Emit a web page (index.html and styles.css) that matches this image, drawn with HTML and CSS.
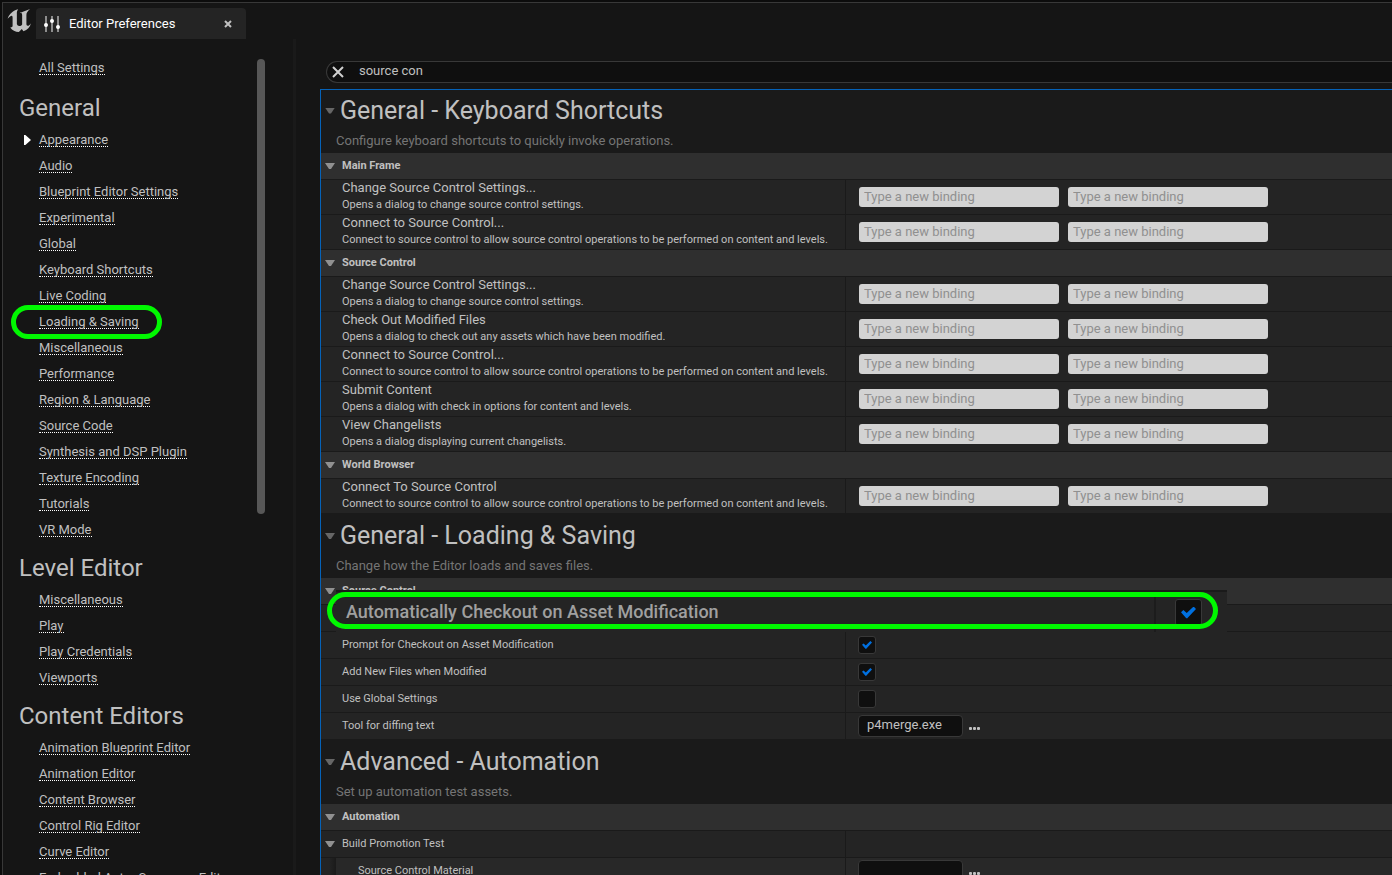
FILE: index.html
```html
<!DOCTYPE html>
<html lang="en">
<head>
<meta charset="utf-8">
<title>Editor Preferences</title>
<link rel="stylesheet" href="styles.css">
</head>
<body>
<div class="window">
  <header class="titlebar">
    <svg class="logo" viewBox="20 22 76 74" aria-hidden="true"><path d="M22 54C26 39 39 29 54 25C50 30 50 33 50 39V70C51 74 54 76 57 76C61 76 64 74 66 71V42C66 37 63 35 59 36C66 33 77 29 90 24C83 31 79 35 79 42V69C79 73 80 75 83 75C87 75 90 71 93 67C90 80 82 87 70 92L65 85L56 94C45 93 36 89 30 80C35 80 37 78 37 75V50C37 46 35 44 33 45C29 46 26 49 22 54Z"/></svg>
    <div class="tab">
      <svg class="sliders" viewBox="0 0 16 16" aria-hidden="true"><path d="M2 0V16M8 0V16M14 0V16"/><circle cx="2" cy="9" r="2"/><circle cx="8" cy="5" r="2"/><circle cx="14" cy="11" r="2"/></svg>
      <span class="tab-title">Editor Preferences</span>
      <button class="tab-close" aria-label="Close tab"><svg viewBox="0 0 8 8"><path d="M1 1L7 7M7 1L1 7"/></svg></button>
    </div>
  </header>
  <div class="body">
    <nav class="sidebar">
      <div class="nav-list">
        <div class="nav-item all"><a href="#">All Settings</a></div>
        <h2>General</h2>
        <div class="nav-item current"><a href="#">Appearance</a></div>
        <div class="nav-item"><a href="#">Audio</a></div>
        <div class="nav-item"><a href="#">Blueprint Editor Settings</a></div>
        <div class="nav-item"><a href="#">Experimental</a></div>
        <div class="nav-item"><a href="#">Global</a></div>
        <div class="nav-item"><a href="#">Keyboard Shortcuts</a></div>
        <div class="nav-item"><a href="#">Live Coding</a></div>
        <div class="nav-item marked"><a href="#">Loading &amp; Saving</a></div>
        <div class="nav-item"><a href="#">Miscellaneous</a></div>
        <div class="nav-item"><a href="#">Performance</a></div>
        <div class="nav-item"><a href="#">Region &amp; Language</a></div>
        <div class="nav-item"><a href="#">Source Code</a></div>
        <div class="nav-item"><a href="#">Synthesis and DSP Plugin</a></div>
        <div class="nav-item"><a href="#">Texture Encoding</a></div>
        <div class="nav-item"><a href="#">Tutorials</a></div>
        <div class="nav-item"><a href="#">VR Mode</a></div>
        <h2>Level Editor</h2>
        <div class="nav-item"><a href="#">Miscellaneous</a></div>
        <div class="nav-item"><a href="#">Play</a></div>
        <div class="nav-item"><a href="#">Play Credentials</a></div>
        <div class="nav-item"><a href="#">Viewports</a></div>
        <h2>Content Editors</h2>
        <div class="nav-item"><a href="#">Animation Blueprint Editor</a></div>
        <div class="nav-item"><a href="#">Animation Editor</a></div>
        <div class="nav-item"><a href="#">Content Browser</a></div>
        <div class="nav-item"><a href="#">Control Rig Editor</a></div>
        <div class="nav-item"><a href="#">Curve Editor</a></div>
        <div class="nav-item"><a href="#">Embedded Actor Sequence Editor</a></div>
      </div>
      <div class="scrollbar"></div>
    </nav>
    <div class="splitter"></div>
    <main class="content">
      <div class="search">
        <button class="clear" aria-label="Clear search"><svg viewBox="0 0 12 12"><path d="M1 1L11 11M11 1L1 11"/></svg></button>
        <input type="text" value="source con" aria-label="Search settings">
      </div>
      <div class="details">
        <section>
          <div class="section-title"><span class="caret dim"></span><h1>General - Keyboard Shortcuts</h1></div>
          <p class="section-desc">Configure keyboard shortcuts to quickly invoke operations.</p>
          <h3 class="category"><span class="caret"></span>Main Frame</h3>
          <div class="row tall"><div class="name"><b>Change Source Control Settings...</b><small>Opens a dialog to change source control settings.</small></div><div class="value"><input class="binding" placeholder="Type a new binding" aria-label="Change Source Control Settings, binding 1"><input class="binding" placeholder="Type a new binding" aria-label="Change Source Control Settings, binding 2"></div></div>
          <div class="row tall"><div class="name"><b>Connect to Source Control...</b><small>Connect to source control to allow source control operations to be performed on content and levels.</small></div><div class="value"><input class="binding" placeholder="Type a new binding" aria-label="Connect to Source Control, binding 1"><input class="binding" placeholder="Type a new binding" aria-label="Connect to Source Control, binding 2"></div></div>
          <h3 class="category"><span class="caret"></span>Source Control</h3>
          <div class="row tall"><div class="name"><b>Change Source Control Settings...</b><small>Opens a dialog to change source control settings.</small></div><div class="value"><input class="binding" placeholder="Type a new binding" aria-label="Change Source Control Settings, binding 1"><input class="binding" placeholder="Type a new binding" aria-label="Change Source Control Settings, binding 2"></div></div>
          <div class="row tall"><div class="name"><b>Check Out Modified Files</b><small>Opens a dialog to check out any assets which have been modified.</small></div><div class="value"><input class="binding" placeholder="Type a new binding" aria-label="Check Out Modified Files, binding 1"><input class="binding" placeholder="Type a new binding" aria-label="Check Out Modified Files, binding 2"></div></div>
          <div class="row tall"><div class="name"><b>Connect to Source Control...</b><small>Connect to source control to allow source control operations to be performed on content and levels.</small></div><div class="value"><input class="binding" placeholder="Type a new binding" aria-label="Connect to Source Control, binding 1"><input class="binding" placeholder="Type a new binding" aria-label="Connect to Source Control, binding 2"></div></div>
          <div class="row tall"><div class="name"><b>Submit Content</b><small>Opens a dialog with check in options for content and levels.</small></div><div class="value"><input class="binding" placeholder="Type a new binding" aria-label="Submit Content, binding 1"><input class="binding" placeholder="Type a new binding" aria-label="Submit Content, binding 2"></div></div>
          <div class="row tall"><div class="name"><b>View Changelists</b><small>Opens a dialog displaying current changelists.</small></div><div class="value"><input class="binding" placeholder="Type a new binding" aria-label="View Changelists, binding 1"><input class="binding" placeholder="Type a new binding" aria-label="View Changelists, binding 2"></div></div>
          <h3 class="category"><span class="caret"></span>World Browser</h3>
          <div class="row tall"><div class="name"><b>Connect To Source Control</b><small>Connect to source control to allow source control operations to be performed on content and levels.</small></div><div class="value"><input class="binding" placeholder="Type a new binding" aria-label="Connect To Source Control, binding 1"><input class="binding" placeholder="Type a new binding" aria-label="Connect To Source Control, binding 2"></div></div>
        </section>
        <section>
          <div class="section-title"><span class="caret dim"></span><h1>General - Loading &amp; Saving</h1></div>
          <p class="section-desc">Change how the Editor loads and saves files.</p>
          <h3 class="category"><span class="caret"></span>Source Control</h3>
          <div class="row zoomed">
            <div class="name"></div><div class="value"></div>
            <div class="callout">
              <label class="callout-name" for="auto">Automatically Checkout on Asset Modification</label>
              <div class="callout-value"><input type="checkbox" class="check large" id="auto" checked></div>
            </div>
          </div>
          <div class="row"><label class="name" for="prompt">Prompt for Checkout on Asset Modification</label><div class="value prop"><input type="checkbox" class="check" id="prompt" checked></div></div>
          <div class="row"><label class="name" for="addnew">Add New Files when Modified</label><div class="value prop"><input type="checkbox" class="check" id="addnew" checked></div></div>
          <div class="row"><label class="name" for="useglobal">Use Global Settings</label><div class="value prop"><input type="checkbox" class="check" id="useglobal"></div></div>
          <div class="row"><label class="name" for="difftool">Tool for diffing text</label><div class="value prop"><input type="text" class="path" id="difftool" value="p4merge.exe"><button class="more" aria-label="Browse"><i></i><i></i><i></i></button></div></div>
        </section>
        <section>
          <div class="section-title"><span class="caret dim"></span><h1>Advanced - Automation</h1></div>
          <p class="section-desc">Set up automation test assets.</p>
          <h3 class="category"><span class="caret"></span>Automation</h3>
          <div class="row"><div class="name group"><span class="caret"></span>Build Promotion Test</div><div class="value prop"></div></div>
          <div class="row nested"><label class="name" for="material">Source Control Material</label><div class="value prop"><input type="text" class="path" id="material"><button class="more" aria-label="Browse"><i></i><i></i><i></i></button></div></div>
        </section>
      </div>
    </main>
  </div>
</div>
</body>
</html>
```

FILE: styles.css
```css
*, *::before, *::after { box-sizing: border-box; }

body {
  margin: 0;
  height: 100vh;
  overflow: hidden;
  padding: 2px 0 0 2px;
  background: #0c0c0c;
  color: #c0c0c0;
  font: 13px/16px Roboto, "Liberation Sans", sans-serif;
}

h1, h2, h3, p { margin: 0; font-weight: 400; }
button { padding: 0; border: 0; background: none; display: flex; }
input { font: inherit; color: inherit; outline: 0; margin: 0; min-width: 0; }

.window {
  height: 100%;
  display: flex;
  flex-direction: column;
  background: #151515;
  border-top: 1px solid #383838;
  border-left: 1px solid #383838;
}

.titlebar { display: flex; height: 36px; padding: 5px 0 0 4px; flex: none; }
.logo { width: 25px; height: 25px; margin-right: 4px; fill: #c0c0c0; }
.tab {
  display: flex;
  align-items: center;
  width: 210px;
  padding: 0 14px 0 8px;
  border-radius: 4px 4px 0 0;
  background: #242424;
  color: #fff;
}
.sliders { width: 16px; height: 16px; stroke: #a8a8a8; stroke-width: 1.6; }
.sliders circle { fill: #fff; stroke: none; }
.tab-title { flex: 1; padding-left: 9px; }
.tab-close svg { width: 8px; height: 8px; stroke: #c0c0c0; stroke-width: 2; }

.body { flex: 1; min-height: 0; display: flex; }

.sidebar { display: flex; width: 290px; flex: none; overflow: hidden; }
.nav-list { width: 254px; padding: 16px 0 0 16px; }
.nav-list h2 { height: 44px; padding-top: 4px; font-size: 24px; line-height: 42px; }
.nav-item { position: relative; display: flex; align-items: center; height: 26px; padding-left: 20px; }
.nav-item.all { margin-bottom: 2px; }
.nav-item a {
  color: inherit;
  text-decoration: none;
  line-height: 13px;
  white-space: nowrap;
  border-bottom: 1px dotted #fff;
}
.nav-item.current::before {
  content: "";
  position: absolute;
  left: 5px;
  width: 7px;
  height: 10px;
  background: #fff;
  clip-path: polygon(0 0, 20% 0, 100% 50%, 20% 100%, 0 100%);
}
.nav-item.marked::after {
  content: "";
  position: absolute;
  left: -8px;
  top: -4px;
  width: 151px;
  height: 34px;
  border: 5px solid #00f800;
  border-radius: 17px;
}
.scrollbar { width: 8px; height: 54.4%; margin-top: 20px; border-radius: 4px; background: #575757; }
.splitter { width: 3px; flex: none; background: #1a1a1a; }

.content { flex: 1; min-width: 0; display: flex; flex-direction: column; padding: 22px 0 0 24px; }
.search {
  display: flex;
  align-items: center;
  flex: none;
  height: 22px;
  margin: 0 0 6px 6px;
  padding-left: 5px;
  border: 1px solid #383838;
  border-right: 0;
  border-radius: 11px 0 0 11px;
  background: #0f0f0f;
}
.clear svg { width: 12px; height: 12px; stroke: #d0d0d0; stroke-width: 2; }
.search input { flex: 1; height: 20px; padding: 0 0 3px 15px; border: 0; background: none; }

.details {
  flex: 1;
  min-height: 0;
  overflow: hidden;
  border-top: 1px solid #0562b8;
  border-left: 1px solid #0562b8;
  background: #1a1a1a;
}
.caret {
  width: 10px;
  height: 6px;
  flex: none;
  background: #909090;
  clip-path: polygon(0 0, 100% 0, 60% 100%, 40% 100%);
}
.caret.dim { background: #666; }
.section-title { display: flex; align-items: center; height: 44px; padding-left: 4px; gap: 5px; }
section:first-child .section-title { height: 43px; padding-bottom: 2px; }
.section-title h1 { font-size: 25px; line-height: 32px; }
.section-desc { height: 20px; padding-left: 15px; color: #757575; }
.category {
  display: flex;
  align-items: center;
  gap: 7px;
  height: 27px;
  padding-left: 4px;
  border-bottom: 1px solid #1a1a1a;
  background: #2f2f2f;
  font-size: 11px;
  font-weight: 700;
}

.row {
  position: relative;
  display: grid;
  grid-template-columns: 524fr 547fr;
  height: 27px;
  border-bottom: 1px solid #1a1a1a;
  background: #242424;
  font-size: 11px;
}
.row.tall { height: 35px; }
.name { display: flex; align-items: center; padding-left: 21px; min-width: 0; white-space: nowrap; }
.tall .name { flex-direction: column; align-items: flex-start; justify-content: flex-start; }
.name b { font-size: 13px; font-weight: 400; line-height: 16px; }
.name small { font-size: 11px; line-height: 17px; }
.name.group { padding-left: 4px; gap: 7px; }
.value { display: flex; align-items: center; gap: 9px; padding-left: 13px; border-left: 1px solid #1a1a1a; }
.value.prop { padding-left: 12px; gap: 6px; }
.binding {
  width: 200px;
  height: 20px;
  padding: 0 5px 2px;
  border: 0;
  border-radius: 3px;
  background: #d3d3d3;
  color: #222;
  font-size: 13px;
}
.binding::placeholder { color: #909090; opacity: 1; }
.path {
  width: 105px;
  height: 22px;
  padding: 0 8px 3px;
  border: 1px solid #383838;
  border-radius: 4px;
  background: #0f0f0f;
  font-size: 13px;
}
.more { gap: 1px; padding-top: 5px; }
.more i { width: 3px; height: 3px; border-radius: 1px; background: #c0c0c0; }

.check {
  appearance: none;
  display: grid;
  place-items: center;
  width: 18px;
  height: 18px;
  border: 1px solid #383838;
  border-radius: 3px;
  background: #0f0f0f;
}
.check:checked::before {
  content: "";
  width: 10px;
  height: 8px;
  background: #0070e0;
  clip-path: polygon(0 48%, 16% 30%, 38% 55%, 84% 0, 100% 20%, 40% 100%, 32% 94%);
}
.check.large { width: 27px; height: 27px; }
.check.large:checked::before { width: 15px; height: 12px; }

.nested { background: linear-gradient(90deg, #242424 0, #242424 8px, #1a1a1a 15px, #282828 15px); }
.nested .name { padding-left: 37px; }

/* Enlarged row with its highlight ring, lying over its neighbours */
.callout {
  position: absolute;
  z-index: 1;
  left: 15px;
  top: -15px;
  width: 891px;
  height: 42px;
  display: flex;
  border-top: 2px solid #1a1a1a;
  background: #242424;
  color: #a0a0a0;
  font-size: 18px;
  font-weight: 500;
}
.callout-name { flex: 1; padding-left: 10px; line-height: 40px; }
.callout-value { display: flex; align-items: flex-start; width: 73px; padding: 7px 0 0 19px; border-left: 2px solid #1c1c1c; }
.callout::after {
  content: "";
  position: absolute;
  left: -9px;
  top: 0;
  width: 891px;
  height: 37px;
  border: 5px solid #00f800;
  border-radius: 19px;
  pointer-events: none;
}
```
